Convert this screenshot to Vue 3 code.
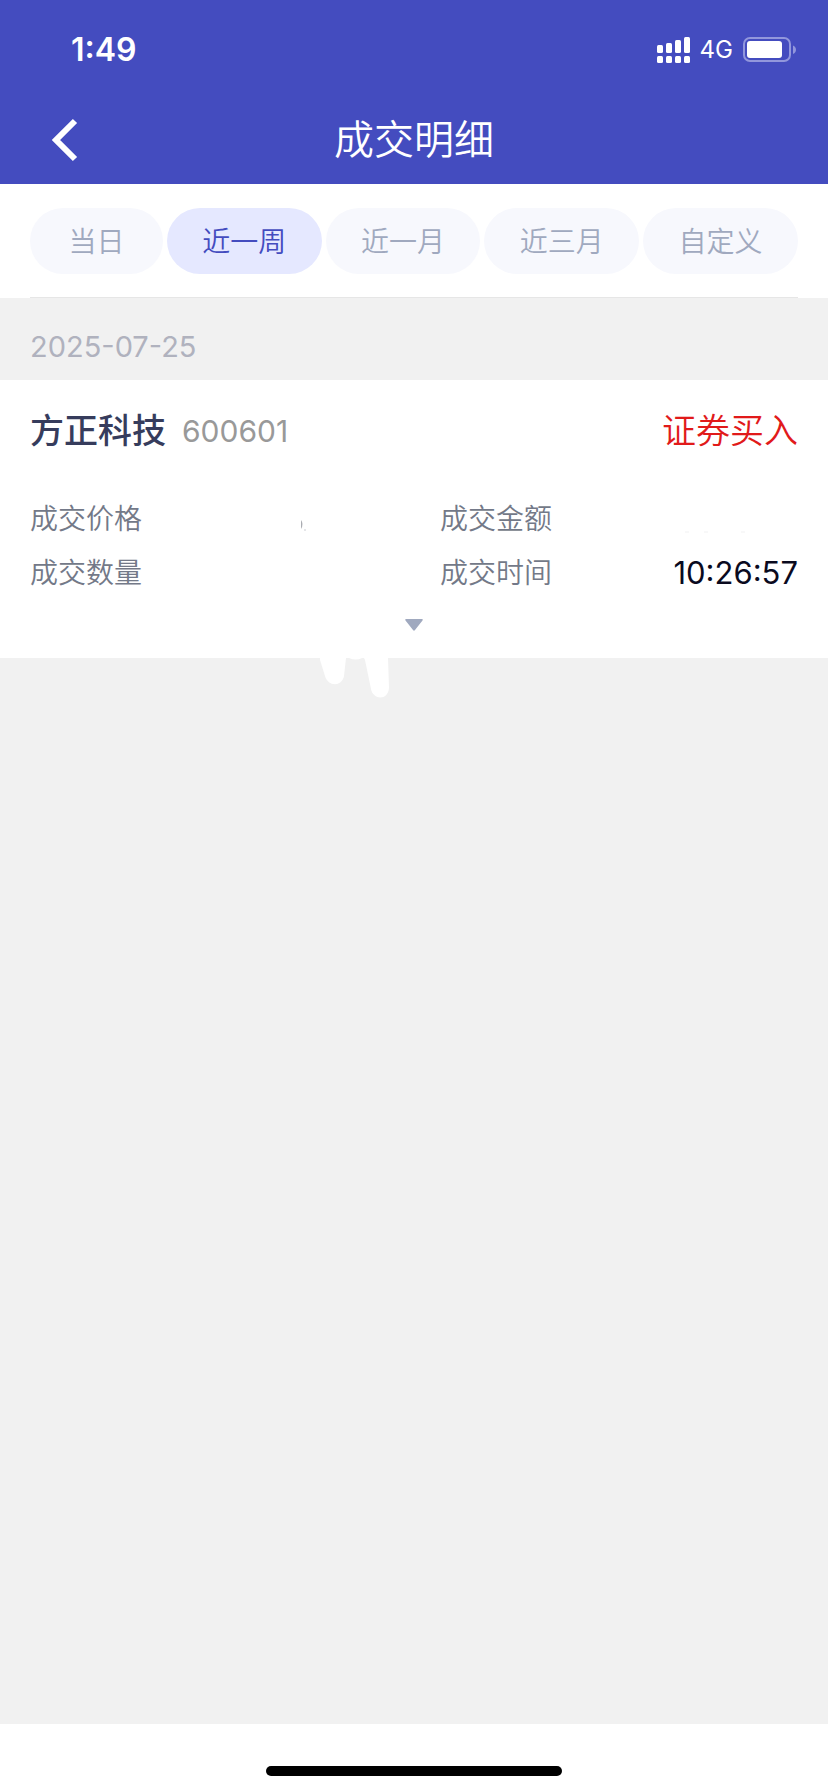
<script setup>
import { ref } from 'vue'

const ranges = ['当日', '近一周', '近一月', '近三月', '自定义']
const active = ref('近一周')
const signal = [8, 10, 13, 16]
</script>

<template>
  <div class="screen">
    <header class="top">
      <div class="status">
        <span class="clock">1:49</span>
        <div class="indicators">
          <svg class="signal" width="33" height="26" viewBox="0 0 33 26" aria-hidden="true">
            <g v-for="(h, i) in signal" :key="i" fill="#fff">
              <rect :x="i * 9" :y="16 - h" width="6" :height="h" rx="1.5" />
              <rect :x="i * 9" y="19" width="6" height="7" rx="1.5" />
            </g>
          </svg>
          <span class="network">4G</span>
          <svg class="battery" width="53" height="26" viewBox="0 0 53 26" aria-hidden="true">
            <rect x="1" y="1" width="46" height="23" rx="6" fill="none" stroke="#9297dc" stroke-width="2" />
            <rect x="4" y="4" width="35" height="17" rx="3" fill="#fff" />
            <path d="M50 8.5c4 1.500 4 7 0 8.500z" fill="#9297dc" />
          </svg>
        </div>
      </div>
      <nav class="bar">
        <button class="back" type="button" aria-label="返回">
          <svg width="26" height="44" viewBox="0 0 26 44" aria-hidden="true">
            <path d="M23 3L4 22L23 41" fill="none" stroke="#fff" stroke-width="6" />
          </svg>
        </button>
        <h1>成交明细</h1>
      </nav>
    </header>

    <div class="filters">
      <div class="tabs">
        <button
          v-for="r in ranges"
          :key="r"
          type="button"
          class="tab"
          :class="{ on: r === active, short: r.length === 2 }"
          :aria-pressed="r === active"
          @click="active = r"
        >{{ r }}</button>
      </div>
    </div>

    <main>
      <h2 class="date">2025-07-25</h2>
      <article class="card">
        <div class="head">
          <span class="name">方正科技</span>
          <span class="code">600601</span>
          <span class="side">证券买入</span>
        </div>
        <dl class="fields">
          <div class="field">
            <dt>成交价格</dt>
            <dd>
              <svg width="88" height="32" viewBox="0 0 88 32" aria-hidden="true">
                <path d="M1 17q3 4 0 9z" fill="#aaacb2" />
                <circle cx="5" cy="27" r="1" fill="#dddee2" />
              </svg>
            </dd>
          </div>
          <div class="field">
            <dt>成交金额</dt>
            <dd>
              <svg width="120" height="32" viewBox="0 0 120 32" aria-hidden="true">
                <path d="M7 29h4M26 29h4M63 29h4" stroke="#f1f1f2" />
              </svg>
            </dd>
          </div>
          <div class="field">
            <dt>成交数量</dt>
            <dd></dd>
          </div>
          <div class="field">
            <dt>成交时间</dt>
            <dd>10:26:57</dd>
          </div>
        </dl>
        <button class="expand" type="button" aria-label="展开">
          <svg width="18" height="12" viewBox="0 0 18 12" aria-hidden="true">
            <path d="M1 0H17Q18.500 0 17.500 1.500L10 11Q9 12.500 8 11L.5 1.500Q-.5 0 1 0z" fill="#a0a9bf" />
          </svg>
        </button>
        <svg class="drips" width="68" height="40" viewBox="0 0 68 40" aria-hidden="true">
          <path d="M0 0H26L24 18C22 29 8 29 5 18L0 2zM44 0H68L69 30C68 43 53 42 51 31L45 2zM29 0H42Q36 3 29 0z" fill="#fff" />
        </svg>
      </article>
    </main>

    <footer><div class="home"></div></footer>
  </div>
</template>

<style>
body {
  margin: 0;
}
</style>

<style scoped>
.screen {
  display: flex;
  flex-direction: column;
  min-height: 100vh;
  background: #f1f1f1;
  font-family: Inter, "Noto Sans CJK SC", sans-serif;
  font-size: 28px;
  line-height: 32px;
}
button {
  border: 0;
  padding: 0;
  background: none;
  font: inherit;
  cursor: pointer;
}
svg {
  display: block;
  overflow: visible;
}
.top {
  background: #444cbf;
  color: #fff;
}
.status {
  display: flex;
  justify-content: space-between;
  align-items: center;
  height: 100px;
  padding: 0 32px 0 71px;
}
.clock {
  font-size: 32px;
  font-weight: 600;
}
.indicators {
  display: flex;
  align-items: center;
}
.network {
  margin: 0 10px;
  font-size: 24px;
  font-weight: 400;
}
.bar {
  display: grid;
  grid-template-columns: 80px 1fr 80px;
  align-items: center;
  height: 80px;
  padding-bottom: 4px;
}
.back {
  justify-self: end;
  padding-right: 2px;
}
h1 {
  margin: 0;
  font-size: 40px;
  font-weight: 350;
  line-height: 80px;
  text-align: center;
}
.filters {
  padding: 24px 30px 0;
  background: #fff;
}
.tabs {
  display: flex;
  gap: 4px;
  padding-bottom: 23px;
  border-bottom: 1px solid #e6e6e6;
}
.tab {
  flex: 155 1 0;
  height: 66px;
  padding-top: 2px;
  border-radius: 33px;
  background: #f7f8fd;
  color: #a0a9bf;
  font-weight: 350;
}
.tab.short {
  flex-grow: 133;
}
.tab.on {
  background: #e5e8ff;
  color: #444cbf;
}
main {
  flex: 1;
}
.date {
  margin: 0;
  padding: 33px 30px 17px;
  color: #b0b2be;
  font-size: 29px;
  font-weight: 400;
}
.card {
  position: relative;
  padding: 31px 30px 24px;
  background: #fff;
}
.head {
  display: flex;
  align-items: center;
  height: 40px;
}
.name {
  color: #363c5c;
  font-size: 34px;
  font-weight: 500;
}
.code {
  margin-left: 16px;
  color: #999;
  font-size: 30px;
}
.side {
  margin-left: auto;
  color: #e11a1a;
  font-size: 34px;
  font-weight: 350;
}
.fields {
  display: grid;
  grid-template-columns: 1fr 1fr;
  gap: 22px 52px;
  margin: 52px 0 0;
}
.field {
  display: flex;
  justify-content: space-between;
  height: 32px;
}
dt {
  color: #737988;
  font-weight: 350;
}
dd {
  margin: 0;
  color: #0a0a1e;
  font-size: 31px;
}
.expand {
  display: block;
  margin: 20px auto 0;
  padding: 10px 20px 3px;
}
.drips {
  position: absolute;
  top: 100%;
  left: 320px;
}
footer {
  display: flex;
  justify-content: center;
  padding: 42px 0 16px;
  background: #fff;
}
.home {
  width: 296px;
  height: 10px;
  border-radius: 5px;
  background: #000;
}
</style>
